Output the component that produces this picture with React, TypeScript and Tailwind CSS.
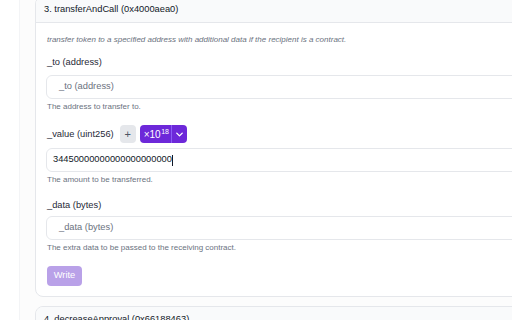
import React from "react";

function Field({
  label,
  extra,
  placeholder,
  value,
  help,
  labelGap,
}: {
  label: string;
  extra?: React.ReactNode;
  placeholder?: string;
  value?: string;
  help: string;
  labelGap: string;
}) {
  return (
    <div className="flex flex-col">
      <div className="flex items-center h-[18px] gap-[5px]">
        <span className="text-[9.3px] leading-[12px] text-[#1f2937]">{label}</span>
        {extra}
      </div>
      <div
        className={`${labelGap} -ml-[1px] h-[24px] w-[480px] rounded-[6px] border border-[#e5e7eb] bg-white flex items-center`}
      >
        {value ? (
          <span className="pl-[6px] text-[9.3px] text-[#111827] flex items-center">
            {value}
            <span className="inline-block w-[1px] h-[11px] bg-[#111827] ml-[0.5px]" />
          </span>
        ) : (
          <span className="pl-[12px] text-[9.3px] text-[#6b7280]">{placeholder}</span>
        )}
      </div>
      <div className="mt-[2px] text-[8px] leading-[12px] text-[#6b7280]">{help}</div>
    </div>
  );
}

export default function App() {
  return (
    <div
      className="w-[512px] h-[320px] overflow-hidden flex bg-white"
      style={{ fontFamily: '"Liberation Sans", Arial, sans-serif' }}
    >
      <div className="w-[20px] shrink-0 bg-white border-r border-[#f3f4f6]" />
      <div className="flex-1 bg-[#fcfcfc] pl-[15px] overflow-hidden">
        <div className="-mt-[4px] flex flex-col gap-[9px] w-[560px]">
          <div className="rounded-[8px] border border-[#e5e7eb] bg-white overflow-hidden">
            <div className="h-[26px] bg-[#f9fafb] border-b border-[#e5e7eb] flex items-center px-[8px] text-[9.3px] text-[#111827]">
              3. transferAndCall (0x4000aea0)
            </div>
            <div className="px-[11px] pt-[11px] pb-[10px] flex flex-col">
              <div className="text-[8px] leading-[12px] italic text-[#6b7280]">
                transfer token to a specified address with additional data if the recipient is a contract.
              </div>
              <div className="mt-[7px]">
                <Field
                  label="_to (address)"
                  placeholder="_to (address)"
                  help="The address to transfer to."
                  labelGap="mt-[4px]"
                />
              </div>
              <div className="mt-[12px]">
                <Field
                  label="_value (uint256)"
                  extra={
                    <div className="flex items-center gap-[4px] ml-[1px]">
                      <div className="w-[16px] h-[18px] rounded-[4px] bg-[#e5e7eb] flex items-center justify-center text-[#4b5563] text-[11px] leading-none">
                        +
                      </div>
                      <div className="h-[18px] rounded-[4px] bg-[#6d28d9] flex items-center text-white">
                        <span className="pl-[4px] pr-[2px] flex items-start">
                          <span className="text-[10px] leading-[10px] mt-[2px]">×10</span>
                          <span className="text-[7px] leading-[7px] ml-[0.5px]">18</span>
                        </span>
                        <span className="h-full w-[1px] bg-[#8b5cf6]" />
                        <span className="px-[2px] flex items-center">
                          <svg width="11" height="11" viewBox="0 0 24 24" fill="none" stroke="white" strokeWidth="3" strokeLinecap="round" strokeLinejoin="round">
                            <path d="M6 9l6 6 6-6" />
                          </svg>
                        </span>
                      </div>
                    </div>
                  }
                  value="34450000000000000000000"
                  help="The amount to be transferred."
                  labelGap="mt-[5px]"
                />
              </div>
              <div className="mt-[10px]">
                <Field
                  label="_data (bytes)"
                  placeholder="_data (bytes)"
                  help="The extra data to be passed to the receiving contract."
                  labelGap="mt-[2px]"
                />
              </div>
              <div className="mt-[12px]">
                <div className="w-[35px] h-[20px] rounded-[4px] bg-[#b9a1e8] text-white text-[9.3px] flex items-center justify-center">
                  Write
                </div>
              </div>
            </div>
          </div>
          <div className="rounded-[8px] border border-[#e5e7eb] bg-white overflow-hidden">
            <div className="h-[26px] bg-[#f9fafb] border-b border-[#e5e7eb] flex items-center px-[8px] text-[9.3px] text-[#111827]">
              4. decreaseApproval (0x66188463)
            </div>
          </div>
        </div>
      </div>
    </div>
  );
}
